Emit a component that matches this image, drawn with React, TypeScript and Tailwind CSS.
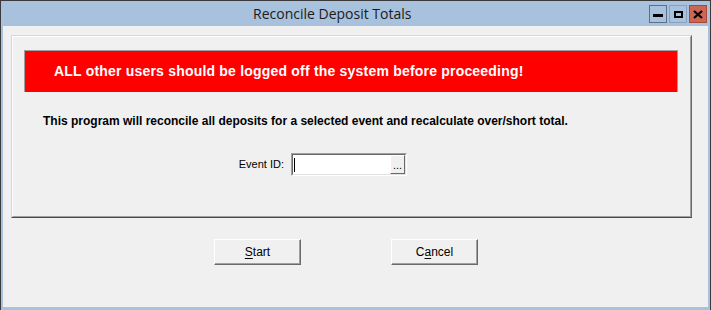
export default function App() {
  return (
    <div className="w-[711px] h-[310px] bg-[#a8c1dc] border-t border-x border-[#3a3a3a] flex flex-col font-['Liberation_Sans',sans-serif] text-black overflow-hidden">
      {/* title bar */}
      <div className="relative h-[25px] shrink-0 flex items-center">
        <span className="ml-[252px] font-['Open_Sans',sans-serif] text-[14px] text-[#1b1b1b] leading-none pt-[1px]">
          Reconcile Deposit Totals
        </span>
        <div className="absolute right-[3px] top-[4px] flex gap-[2px]">
          <div className="w-[18px] h-[18px] border border-[#5c6f8a] bg-[#a8c1dc] flex items-center justify-center">
            <div className="w-[10px] h-[3px] bg-black mt-[3px]" />
          </div>
          <div className="w-[18px] h-[18px] border border-[#8aa1bd] bg-[#a8c1dc] flex items-center justify-center">
            <div className="w-[9px] h-[7px] border-2 border-black" />
          </div>
          <div className="w-[18px] h-[18px] border border-[#a8473a] bg-[#cd6553] flex items-center justify-center">
            <svg width="10" height="9" viewBox="0 0 10 9">
              <path d="M1 1 L9 8 M9 1 L1 8" stroke="black" strokeWidth="2.2" />
            </svg>
          </div>
        </div>
      </div>

      {/* client area */}
      <div className="flex-1 mx-[2px] mb-[3px] bg-[#f0f0f0] flex flex-col">
        <div className="mt-[9px] ml-[8px] mr-[16px] h-[183px] border border-t-[#d6d6d6] border-l-[#d6d6d6] border-r-[#696969] border-b-[#4a4a4a]">
          <div className="h-full border border-t-white border-l-white border-r-[#a0a0a0] border-b-[#a0a0a0] flex flex-col">
            <div className="mt-[13px] ml-[11px] mr-[12px] h-[42px] bg-[#ff0000] border-t border-x border-[#a0a0a0] flex items-center pl-[29px]">
              <span className="text-white font-bold text-[14px] tracking-[0.2px]">
                ALL other users should be logged off the system before proceeding!
              </span>
            </div>
            <div className="mt-[20px] ml-[30px] text-[12px] font-bold">
              This program will reconcile all deposits for a selected event and recalculate over/short total.
            </div>
            <div className="mt-[23px] flex items-center">
              <div className="w-[278px] text-right text-[11px] pr-[7px]">Event ID:</div>
              <div className="w-[116px] h-[23px] border border-t-[#a0a0a0] border-l-[#a0a0a0] border-r-white border-b-white">
                <div className="h-full border border-t-[#696969] border-l-[#696969] border-r-[#e3e3e3] border-b-[#e3e3e3] bg-white flex items-center">
                  <div className="ml-[1px] w-[1px] h-[14px] bg-black" />
                  <div className="ml-auto h-full w-[15px] bg-[#f0f0f0] border border-t-white border-l-white border-r-[#696969] border-b-[#696969] flex items-end justify-center pb-[2px] text-[11px] leading-none">
                    ...
                  </div>
                </div>
              </div>
            </div>
          </div>
        </div>

        <div className="mt-[21px] flex">
          <button className="ml-[211px] w-[87px] h-[26px] bg-[#f0f0f0] border border-t-white border-l-white border-r-[#696969] border-b-[#696969] shadow-[inset_-1px_-1px_0_#a0a0a0] text-[12px]">
            <span className="underline underline-offset-2">S</span>tart
          </button>
          <button className="ml-[90px] w-[87px] h-[26px] bg-[#f0f0f0] border border-t-white border-l-white border-r-[#696969] border-b-[#696969] shadow-[inset_-1px_-1px_0_#a0a0a0] text-[12px]">
            C<span className="underline underline-offset-2">a</span>ncel
          </button>
        </div>
      </div>
    </div>
  )
}
